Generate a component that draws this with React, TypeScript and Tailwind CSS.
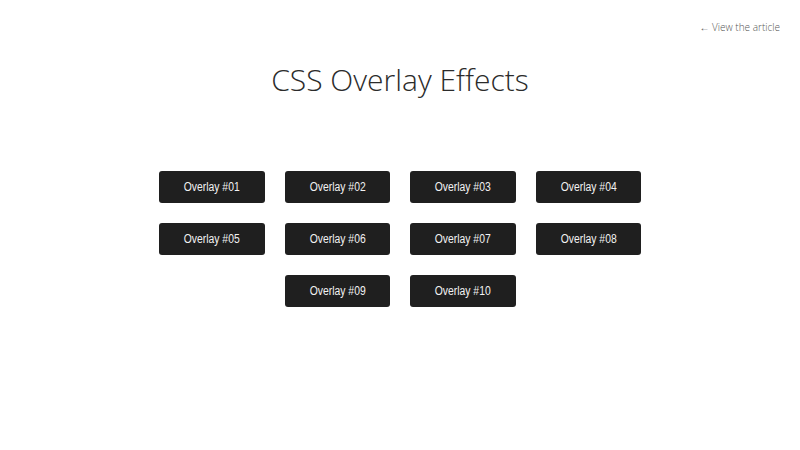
import React from 'react';

const overlays = ['01', '02', '03', '04', '05', '06', '07', '08', '09', '10'];

export default function App() {
  return (
    <div className="min-h-[450px] w-full bg-white font-['Open_Sans',sans-serif]">
      {/* top link */}
      <div className="flex justify-end px-5 pt-[19px]">
        <a className="cursor-pointer text-[10px] font-light leading-4 text-[#555]">← View the article</a>
      </div>

      <h1 className="mt-[25px] text-center text-[30px] font-light leading-10 text-[#2b2b2b]">
        CSS Overlay Effects
      </h1>

      {/* button grid */}
      <div className="mx-auto mt-[71px] flex w-[482px] flex-wrap justify-center gap-x-5 gap-y-5">
        {overlays.map((n) => (
          <button
            key={n}
            className="flex h-[32px] w-[105.5px] items-center justify-center rounded-[3px] bg-[#1f1f1f] font-['Liberation_Sans',Arial,sans-serif] text-[12.5px] text-[#f2f2f2]"
          >
            <span className="inline-block scale-x-[0.83] whitespace-nowrap">Overlay #{n}</span>
          </button>
        ))}
      </div>
    </div>
  );
}
